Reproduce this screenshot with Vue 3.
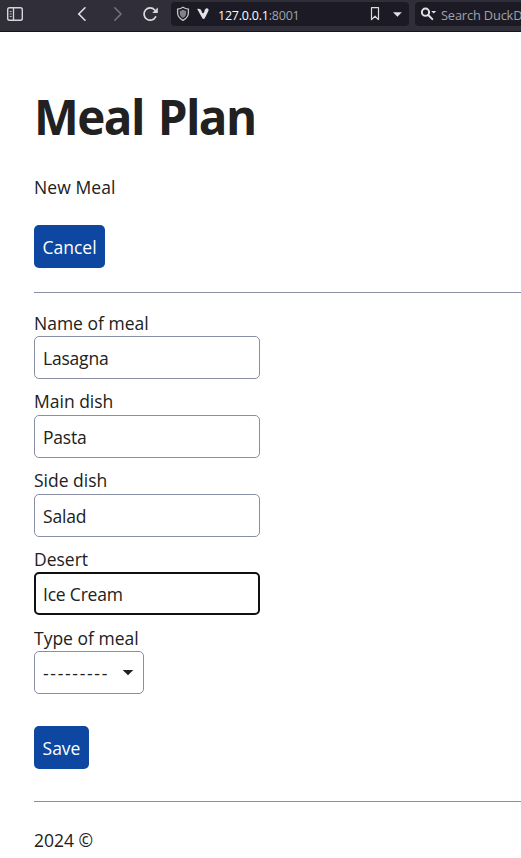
<script setup>
import { ref } from 'vue'

const fields = ref([
  { id: 'name', label: 'Name of meal', value: 'Lasagna' },
  { id: 'main', label: 'Main dish', value: 'Pasta' },
  { id: 'side', label: 'Side dish', value: 'Salad' },
  { id: 'desert', label: 'Desert', value: 'Ice Cream', active: true },
])
</script>

<template>
  <div class="window">
    <header class="toolbar">
      <svg class="nav-icons" width="170" height="30" viewBox="0 0 170 30" fill="none">
        <rect x="7.700" y="7.700" width="14.600" height="12.600" rx="1.800" stroke="#d5d5dc" stroke-width="1.400" />
        <path d="M13.500 8v12" stroke="#d5d5dc" stroke-width="1.300" />
        <path d="M9.700 11.500h2M9.700 14h2M9.700 16.500h2" stroke="#b5b5be" />
        <path d="M85 7.800L78.800 14l6.200 6.200" stroke="#e0e0e6" stroke-width="1.600" stroke-linecap="round" />
        <path d="M114.800 7.800L121 14l-6.200 6.200" stroke="#77767f" stroke-width="1.500" stroke-linecap="round" />
        <path d="M154.700 10A6.100 6.100 0 1 0 155.600 16.800" stroke="#d8d8df" stroke-width="1.700" stroke-linecap="round" />
        <path d="M157.800 7.500v5.500h-5.600z" fill="#d8d8df" />
      </svg>
      <div class="address">
        <svg width="40" height="24" viewBox="0 .4 40 24" fill="none">
          <path d="M12 5.700c1.900 1.300 3.600 1.700 5.400 1.900v3.900c0 3.300-1.900 5.400-5.400 7.200-3.500-1.800-5.400-3.900-5.400-7.200V7.600c1.800-.2 3.500-.6 5.400-1.900z" stroke="#c4c4ca" stroke-width="1.300" />
          <path d="M12 8.200c1.200.7 2.100 1 3.200 1.200v2.200c0 2.100-1.100 3.500-3.200 4.700-2.100-1.200-3.200-2.600-3.200-4.700V9.400c1.100-.2 2-.5 3.200-1.200z" fill="#818189" />
          <path d="M26.200 7.400c2.600-.7 3.900.6 4.600 2.800.6 2 1.600 2 2.300.5.600-1.300.3-3.400 2-3.900 1.700-.4 3 .8 2.300 2.500l-3.500 7.100c-.7 1.300-2 1.300-2.700.1z" fill="#e1e1e7" />
        </svg>
        <span class="url">127.0.0.1<span class="port">:8001</span></span>
        <svg class="address-actions" width="44" height="24" viewBox="0 0 44 24" fill="none">
          <path d="M6.500 5.600h7v12L10 14.200l-3.500 3.400z" stroke="#d9d9df" stroke-width="1.200" stroke-linejoin="round" />
          <path d="M28 10.200h8.800l-4.400 4.600z" fill="#e0e0e6" />
        </svg>
      </div>
      <div class="search">
        <svg width="26" height="24" viewBox="0 0 26 24" fill="none">
          <circle cx="10.500" cy="10.200" r="3.600" stroke="#e0e0e6" stroke-width="2" />
          <path d="M13.200 13l4.100 4.100" stroke="#e0e0e6" stroke-width="2" stroke-linecap="round" />
          <path d="M16.200 9h5l-2.500 2.500z" fill="#e0e0e6" />
        </svg>
        <span class="search-text">Search DuckD</span>
      </div>
    </header>

    <main class="page">
      <h1>Meal Plan</h1>
      <p class="subtitle">New Meal</p>
      <button class="button cancel" type="button">Cancel</button>
      <hr />
      <form @submit.prevent>
        <div v-for="field in fields" :key="field.id" class="field">
          <label :for="field.id">{{ field.label }}</label>
          <input :id="field.id" v-model="field.value" :class="{ active: field.active }" type="text" />
        </div>
        <div class="field">
          <label for="type">Type of meal</label>
          <div id="type" class="select" role="combobox" tabindex="0">
            <span class="placeholder">---------</span>
            <svg width="12" height="8" viewBox="0 0 12 8"><path d="M.7 0h10.600L6 5.300z" fill="#212121" /></svg>
          </div>
        </div>
        <button class="button save" type="submit">Save</button>
      </form>
      <footer>2024 ©</footer>
    </main>
  </div>
</template>

<style>
body {
  margin: 0;
  background: #fff;
}
</style>

<style scoped>
.window {
  width: 100%;
  height: 858px;
  overflow: hidden;
  color: #212121;
  font: 400 17.500px/24px "Open Sans", "Noto Sans", sans-serif;
}
.toolbar {
  display: flex;
  height: 32px;
  box-sizing: border-box;
  border-bottom: 1px solid #15141d;
  background: #302f39;
  overflow: hidden;
}
.toolbar svg {
  flex: none;
}
.address {
  display: flex;
  width: 238px;
  height: 24px;
  margin: 2px 0 0 1px;
  border-radius: 4px;
  background: #1c1b25;
  flex: none;
}
.url {
  margin-left: 7px;
  color: #fbfbfe;
  font-size: 12.500px;
  line-height: 27px;
  letter-spacing: -0.220px;
}
.port {
  color: #a2a2a9;
}
.address-actions {
  margin-left: auto;
}
.search {
  display: flex;
  width: 106px;
  height: 24px;
  margin: 2px 0 0 6px;
  border-radius: 4px 0 0 4px;
  background: #1c1b25;
  flex: none;
}
.search-text {
  color: #a2a2a9;
  font-size: 12.800px;
  line-height: 26px;
  letter-spacing: -0.150px;
  white-space: nowrap;
}
.page {
  padding: 53px 0 0 34px;
}
h1 {
  margin: 0;
  font-size: 47.500px;
  font-weight: 700;
  line-height: 64px;
  letter-spacing: -1.550px;
  word-spacing: 3px;
}
.subtitle {
  margin: 26px 0 0;
  letter-spacing: 0.080px;
}
.button {
  display: block;
  height: 43px;
  padding: 1px 0 0;
  border: 0;
  border-radius: 5px;
  background: #0d47a1;
  color: #fff;
  font: inherit;
}
.cancel {
  width: 71px;
  margin-top: 26px;
}
hr {
  height: 1px;
  margin: 24px 0 17.700px;
  border: 0;
  background: #898ea4;
}
.field {
  height: 78.750px;
}
label {
  display: block;
  height: 25.500px;
}
input,
.select {
  display: block;
  box-sizing: border-box;
  width: 226px;
  height: 43px;
  padding: 1px 8px 0;
  border: 1px solid #898ea4;
  border-radius: 5px;
  background: #fff;
  color: #212121;
  font: inherit;
  letter-spacing: -0.200px;
  outline: 0;
}
input.active {
  padding: 1px 7px 0;
  border: 2px solid #101010;
}
.select {
  display: flex;
  align-items: center;
  justify-content: space-between;
  width: 110px;
  padding: 0 9px 0 8px;
}
.select svg {
  margin-top: 2px;
}
.placeholder {
  letter-spacing: 1.700px;
}
.save {
  width: 55px;
  margin-top: 21.500px;
}
footer {
  margin-top: 32px;
  padding-top: 26px;
  border-top: 1px solid #898ea4;
}
</style>
